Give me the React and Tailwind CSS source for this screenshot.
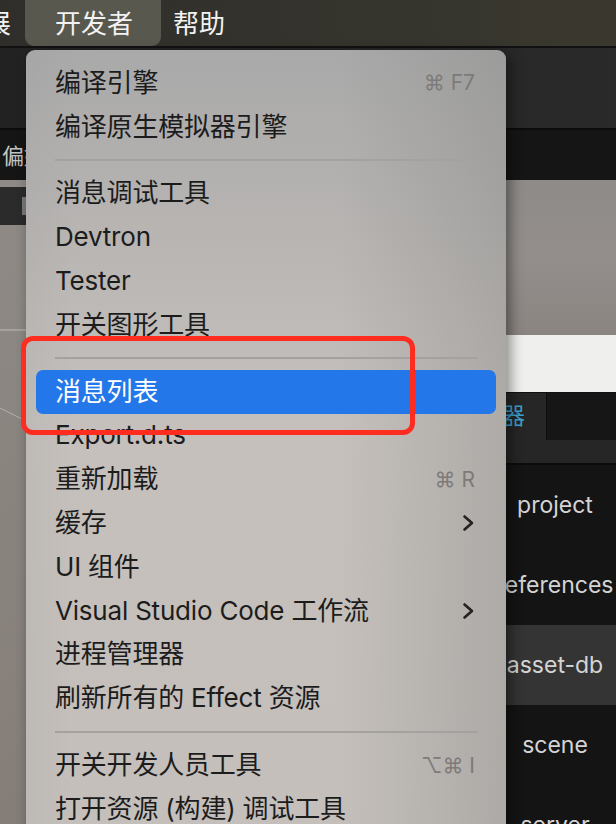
import React from "react";

const font = "font-['Inter','Noto_Sans_CJK_SC',sans-serif]";

const groups = [
  [
    { label: "编译引擎", shortcut: "⌘ F7" },
    { label: "编译原生模拟器引擎" },
  ],
  [
    { label: "消息调试工具" },
    { label: "Devtron" },
    { label: "Tester" },
    { label: "开关图形工具" },
  ],
  [
    { label: "消息列表", active: true },
    { label: "Export.d.ts" },
    { label: "重新加载", shortcut: "⌘ R" },
    { label: "缓存", sub: true },
    { label: "UI 组件" },
    { label: "Visual Studio Code 工作流", sub: true },
    { label: "进程管理器" },
    { label: "刷新所有的 Effect 资源" },
  ],
  [
    { label: "开关开发人员工具", shortcut: "⌥⌘ I" },
    { label: "打开资源 (构建) 调试工具" },
  ],
];

const panels = [
  { name: "project" },
  { name: "references" },
  { name: "asset-db", active: true },
  { name: "scene" },
  { name: "server" },
];

function Chevron() {
  return (
    <svg width="13" height="18" viewBox="0 0 13 18" fill="none">
      <path d="M2.5 2.5 L10 9 L2.5 15.5" stroke="#222" strokeWidth="2.6" strokeLinecap="round" strokeLinejoin="round" />
    </svg>
  );
}

function MenuItem({ label, shortcut, sub, active }) {
  return (
    <div
      className={`mx-[10px] flex h-[43.8px] items-center justify-between rounded-[7px] pl-[19px] pr-[21px] ${
        active ? "bg-[#2477e8] text-white" : "text-[#1c1c1c]"
      }`}
    >
      <span className="text-[26px] leading-none tracking-[-0.2px]">{label}</span>
      {shortcut && (
        <span className="font-['Inter','DejaVu_Sans',sans-serif] text-[21px] leading-none text-[#7d7b79]">{shortcut}</span>
      )}
      {sub && <Chevron />}
    </div>
  );
}

function Separator() {
  return (
    <div className="flex h-[23px] items-center pl-[29px] pr-[28px]">
      <div className="h-[2px] w-full bg-[#a4a19e]" />
    </div>
  );
}

export default function App() {
  return (
    <div className={`relative h-[824px] w-[616px] overflow-hidden bg-[#141414] ${font}`}>
      {/* top menu bar */}
      <div className="flex h-[48px] items-center border-b-2 border-[#111] bg-[linear-gradient(90deg,#2f2e2a,#35342d_60%,#3a382e)] text-[26px] text-[#f2f2f2]">
        <span className="-ml-[15px] w-[40px] shrink-0">展</span>
        <div className="flex h-[46px] w-[136px] items-center self-start rounded-b-[9px] bg-[#59584f] pl-[30px]">开发者</div>
        <span className="ml-[12px]">帮助</span>
      </div>

      {/* editor toolbar */}
      <div className="h-[82px] border-b-2 border-[#0c0c0c] bg-[linear-gradient(90deg,#222,#262626_60%,#2a2a2a)]" />
      <div className="flex h-[50px] items-center bg-[#151515] text-[22px] text-[#c4c4c4]">
        <span className="pl-[2px] pt-[3px]">偏好</span>
      </div>

      {/* workspace */}
      <div className="flex h-[644px] overflow-hidden">
        <div className="relative flex-1 bg-[linear-gradient(180deg,#8f8a86,#8a847f_50%,#857e78)]">
          <div className="mt-[7px] flex h-[38px] items-center justify-end bg-[#2b2b2b] pr-[calc(100%-26px)]">
            <div className="h-[18px] w-[4px] bg-[#7a7a7a]" />
          </div>
          <svg className="absolute inset-0" width="100%" height="100%">
            <line x1="0" y1="150" x2="26" y2="150" stroke="rgba(255,255,255,0.45)" strokeWidth="1" />
            <line x1="0" y1="228" x2="28" y2="242" stroke="rgba(255,255,255,0.35)" strokeWidth="1" />
          </svg>
        </div>
        <div className="flex w-[124px] shrink-0 flex-col">
          <div className="h-[155px] shrink-0 bg-[linear-gradient(180deg,#8f8b88,#938e8b_50%,#8b8582)]" />
          <div className="h-[58px] shrink-0 border-b border-[#111] bg-[#efefed]" />
          <div className="flex h-[47px] shrink-0">
            <div className="flex w-[55px] items-center justify-end border-r border-[#0c0c0c] bg-[#262626] pr-[21px] text-[23px] text-[#3c9fca]">器</div>
            <div className="flex-1 bg-[#161616]" />
          </div>
          <div className="h-[25px] shrink-0 border-b-2 border-[#0c0c0c] bg-[#262626]" />
          <div className="shrink-0">
            {panels.map((p) => (
              <div
                key={p.name}
                className={`flex h-[80px] items-center justify-center pl-[2px] text-[23px] text-[#d4d4d4] ${p.active ? "bg-[#343434]" : ""}`}
              >
                {p.name}
              </div>
            ))}
          </div>
        </div>
      </div>

      {/* developer dropdown */}
      <div className="absolute left-[26px] top-[50px] w-[480px] overflow-hidden rounded-t-[9px] bg-[linear-gradient(180deg,#a9a9a9_0%,#b7b4b2_22%,#c5c0bc_45%,#c4bfbb_100%)] pt-[11px] pb-[20px] shadow-[4px_4px_14px_rgba(0,0,0,0.45)]">
        <div className="pointer-events-none absolute inset-0 bg-[linear-gradient(90deg,rgba(150,150,150,0.15)_0%,transparent_10%,transparent_65%,rgba(130,130,128,0.35)_100%)]" />
        <div className="relative">
          {groups.map((g, i) => (
            <div key={i}>
              {i > 0 && <Separator />}
              {g.map((item) => (
                <MenuItem key={item.label} {...item} />
              ))}
            </div>
          ))}
        </div>
      </div>

      {/* annotation */}
      <div className="absolute left-[21px] top-[336px] h-[99px] w-[394px] rounded-[12px] border-[5px] border-[#ff2d20]" />
    </div>
  );
}
